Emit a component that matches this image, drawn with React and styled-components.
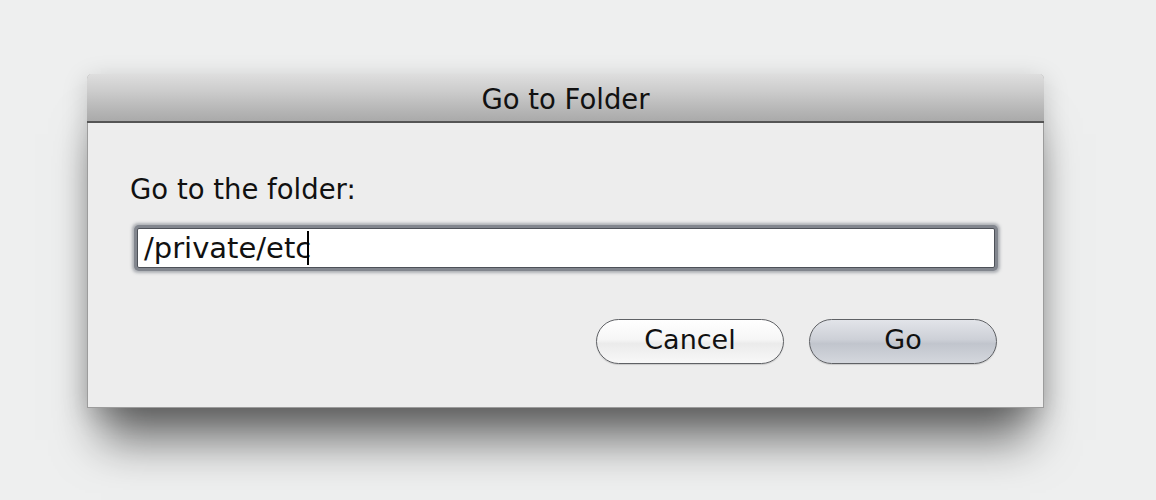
import React from "react";
import styled, { createGlobalStyle } from "styled-components";

const Global = createGlobalStyle`
  html, body { margin: 0; padding: 0; background: #eeefef; }
  body { font-family: "Lucida Grande", "DejaVu Sans", "Noto Sans", sans-serif; }
`;

const Page = styled.div`
  width: 1156px;
  height: 500px;
  box-sizing: border-box;
  padding: 74px 0 0 87px;
  background: #eeefef;
  overflow: hidden;
`;

const Dialog = styled.div`
  width: 957px;
  height: 334px;
  display: flex;
  flex-direction: column;
  background: #ededed;
  border: 1px solid #9c9c9c;
  border-top: none;
  box-sizing: border-box;
  border-radius: 5px 5px 0 0;
  box-shadow: 0 46px 44px -14px rgba(0, 0, 0, 0.55), 0 6px 26px rgba(0, 0, 0, 0.18);
`;

const TitleBar = styled.div`
  height: 49px;
  flex: none;
  display: flex;
  align-items: center;
  justify-content: center;
  box-sizing: border-box;
  border-radius: 5px 5px 0 0;
  border-bottom: 2px solid #555;
  background: linear-gradient(to bottom, #dedede 0%, #cdcdcd 35%, #b4b4b4 80%, #aaaaaa 100%);
  margin: 0 -1px;
  font-size: 27.5px;
  color: #111;
  padding-top: 2px;
`;

const Body = styled.div`
  flex: 1;
  display: flex;
  flex-direction: column;
  padding: 50px 46px 0 43px;
`;

const Label = styled.div`
  font-size: 27.5px;
  color: #111;
  line-height: 32px;
  margin-left: -1px;
`;

const InputBox = styled.div`
  margin-top: 23px;
  height: 38px;
  margin-left: 6px;
  margin-right: 2px;
  background: #fff;
  border: 1px solid #4d5158;
  border-radius: 2px;
  box-shadow: 0 0 0 3px #82868e, 0 0 3px 5px rgba(120, 125, 135, 0.55);
  display: flex;
  align-items: center;
  padding-left: 6px;
  font-size: 29px;
  color: #111;
  line-height: 1;
`;

const Caret = styled.span`
  display: inline-block;
  width: 2px;
  height: 34px;
  margin-left: -4px;
  background: #000;
`;

const Buttons = styled.div`
  margin-top: 51px;
  display: flex;
  justify-content: flex-end;
  gap: 25px;
`;

const Button = styled.button`
  width: 188px;
  height: 45px;
  border-radius: 23px;
  border: 1.5px solid #5f6165;
  font-family: inherit;
  font-size: 27px;
  color: #111;
  padding: 0 0 4px;
  background: ${(p) =>
    p.$default
      ? "linear-gradient(to bottom, #e2e4e9 0%, #cdd0d7 45%, #c1c5cd 55%, #d4d7dd 100%)"
      : "linear-gradient(to bottom, #ffffff 0%, #f6f6f6 45%, #ebebeb 55%, #f8f8f8 100%)"};
  box-shadow: 0 1px 1px rgba(0, 0, 0, 0.15);
`;

export default function App() {
  return (
    <>
      <Global />
      <Page>
        <Dialog>
          <TitleBar>Go to Folder</TitleBar>
          <Body>
            <Label>Go to the folder:</Label>
            <InputBox>
              <span>/private/etc</span>
              <Caret />
            </InputBox>
            <Buttons>
              <Button>Cancel</Button>
              <Button $default>Go</Button>
            </Buttons>
          </Body>
        </Dialog>
      </Page>
    </>
  );
}
